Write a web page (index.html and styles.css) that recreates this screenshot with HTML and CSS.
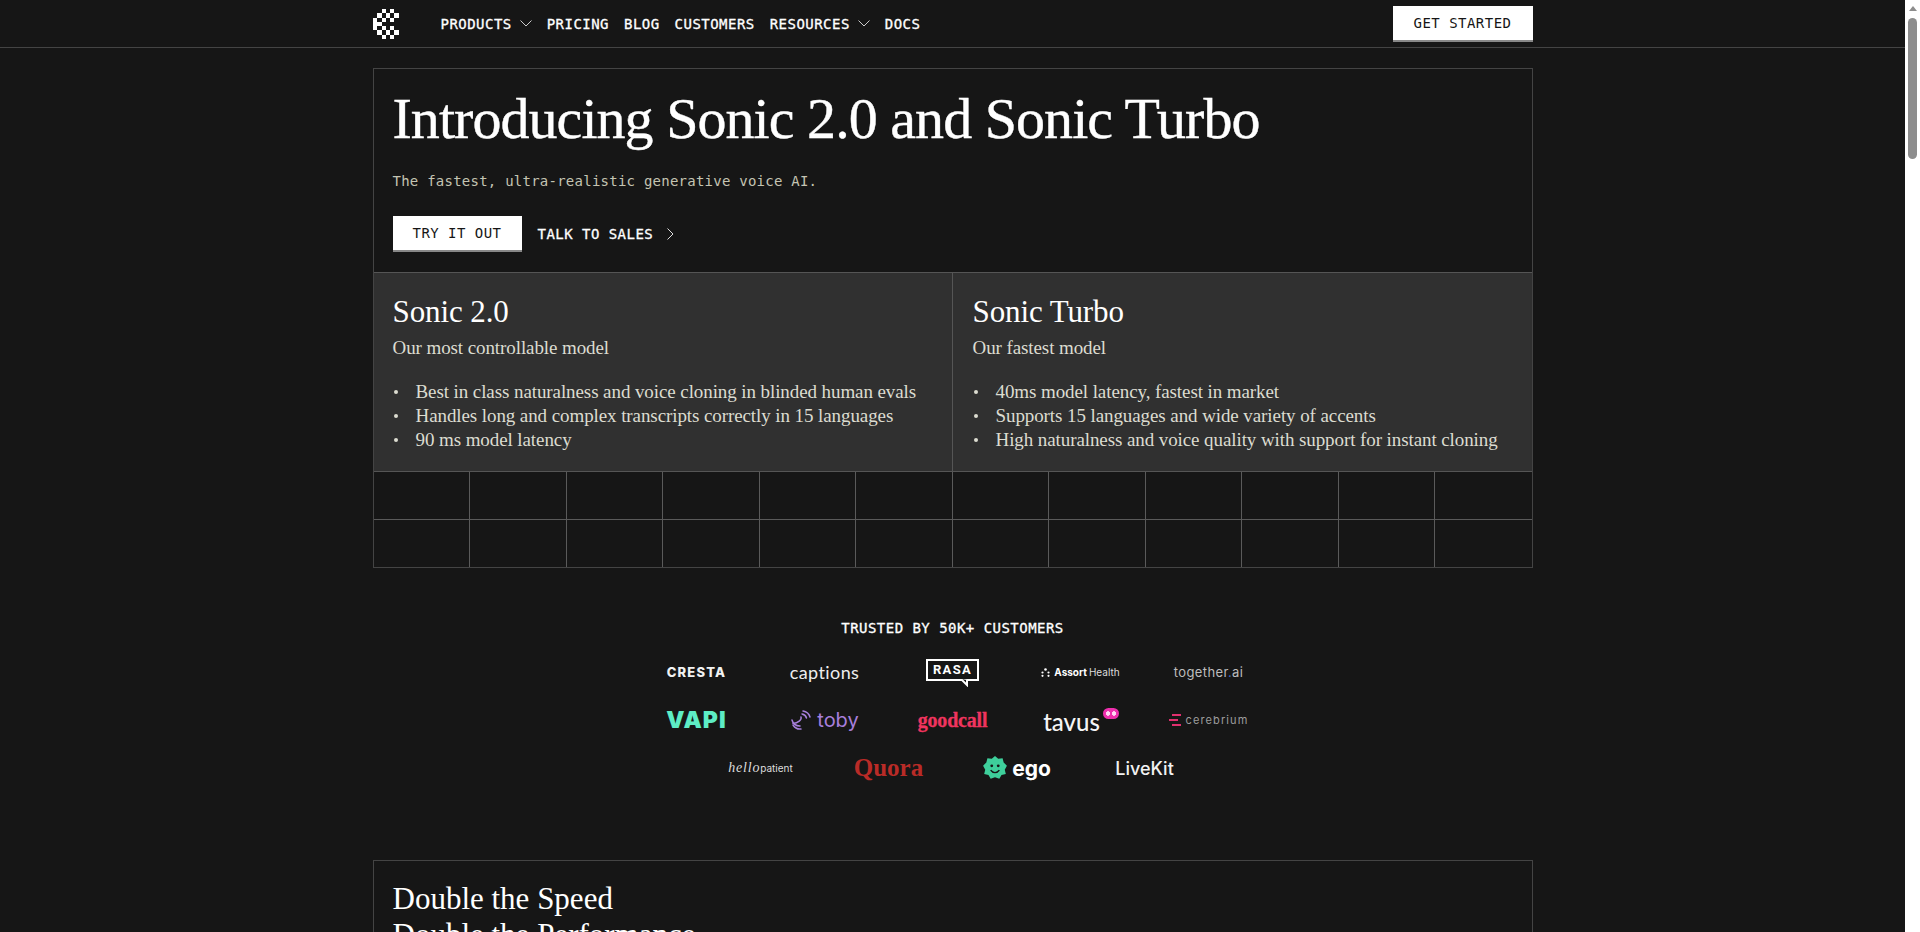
FILE: index.html
```html
<!DOCTYPE html>
<html lang="en">
<head>
<meta charset="utf-8">
<title>Cartesia</title>
<link rel="stylesheet" href="styles.css">
</head>
<body>
<div class="page">
  <header class="nav">
    <div class="nav-inner">
      <div class="nav-left">
        <svg class="logo" viewBox="0 0 7 7" width="30" height="30" shape-rendering="crispEdges" fill="#fff">
          <rect x="2" y="0" width="1" height="1"/><rect x="4" y="0" width="1" height="1"/>
          <rect x="1" y="1" width="1" height="1"/><rect x="3" y="1" width="1" height="1"/><rect x="5" y="1" width="1" height="1"/>
          <rect x="0" y="2" width="1" height="3"/><rect x="2" y="2" width="1" height="1"/><rect x="4" y="2" width="1" height="1"/>
          <rect x="1" y="3" width="1" height="1"/>
          <rect x="2" y="4" width="1" height="1"/><rect x="4" y="4" width="1" height="1"/>
          <rect x="1" y="5" width="1" height="1"/><rect x="3" y="5" width="1" height="1"/><rect x="5" y="5" width="1" height="1"/>
          <rect x="2" y="6" width="1" height="1"/><rect x="4" y="6" width="1" height="1"/>
        </svg>
        <nav class="links">
          <a class="link">PRODUCTS <svg class="caret" viewBox="0 0 12 7" width="12" height="7"><path d="M.5.5 6 6l5.500-5.500" fill="none" stroke="#ccc"/></svg></a>
          <a class="link">PRICING</a>
          <a class="link">BLOG</a>
          <a class="link">CUSTOMERS</a>
          <a class="link">RESOURCES <svg class="caret" viewBox="0 0 12 7" width="12" height="7"><path d="M.5.5 6 6l5.500-5.500" fill="none" stroke="#ccc"/></svg></a>
          <a class="link">DOCS</a>
        </nav>
      </div>
      <a class="btn btn-nav">GET STARTED</a>
    </div>
  </header>

  <main class="main">
    <section class="box">
      <div class="hero">
        <h1 class="title">Introducing Sonic 2.0 and Sonic Turbo</h1>
        <p class="sub">The fastest, ultra-realistic generative voice AI.</p>
        <div class="actions">
          <a class="btn btn-try">TRY IT OUT</a>
          <a class="talk">TALK TO SALES <svg class="chev" viewBox="0 0 7 12" width="7" height="12"><path d="M.5.5 6 6 .5 11.500" fill="none" stroke="#ddd"/></svg></a>
        </div>
      </div>
      <div class="models">
        <article class="model">
          <h2 class="model-name">Sonic 2.0</h2>
          <p class="model-desc">Our most controllable model</p>
          <ul class="list">
            <li>Best in class naturalness and voice cloning in blinded human evals</li>
            <li>Handles long and complex transcripts correctly in 15 languages</li>
            <li>90 ms model latency</li>
          </ul>
        </article>
        <article class="model">
          <h2 class="model-name">Sonic Turbo</h2>
          <p class="model-desc">Our fastest model</p>
          <ul class="list">
            <li>40ms model latency, fastest in market</li>
            <li>Supports 15 languages and wide variety of accents</li>
            <li>High naturalness and voice quality with support for instant cloning</li>
          </ul>
        </article>
      </div>
      <div class="grid">
        <i></i><i></i><i></i><i></i><i></i><i></i><i></i><i></i><i></i><i></i><i></i><i></i>
        <i></i><i></i><i></i><i></i><i></i><i></i><i></i><i></i><i></i><i></i><i></i><i></i>
      </div>
    </section>

    <section class="trusted">
      <h3 class="trusted-title">TRUSTED BY 50K+ CUSTOMERS</h3>
      <div class="logos">
        <div class="cell"><span class="l-cresta">CRESTA</span></div>
        <div class="cell"><span class="l-captions">captions</span></div>
        <div class="cell"><span class="l-rasa">RASA<svg class="rasa-tail" viewBox="0 0 14 8" width="14" height="8"><path d="M1 0 7 6V1" fill="#161616" stroke="#fff" stroke-width="2"/></svg></span></div>
        <div class="cell"><span class="l-assort"><svg viewBox="0 0 9 9" width="9" height="9" fill="#fff"><circle cx="4.500" cy="1.500" r="1.300"/><circle cx="1.500" cy="4.500" r="1.100"/><circle cx="7.500" cy="4.500" r="1.100"/><circle cx="1.500" cy="7.800" r="1.100"/><circle cx="7.500" cy="7.800" r="1.100"/></svg><b>Assort</b> Health</span></div>
        <div class="cell"><span class="l-together">together<em>.</em>ai</span></div>

        <div class="cell"><span class="l-vapi">VAPI</span></div>
        <div class="cell"><span class="l-toby"><svg viewBox="0 0 22 22" width="22" height="22" fill="none" stroke="#a77fdc" stroke-width="1.500" stroke-linecap="round"><path d="M13 2c3 .5 6 2.500 7 6"/><path d="M12 5c2.500.5 4 2 4.500 4"/><path d="M11 8c1 3-3 6-8 6.500"/><path d="M2 11c1 4 4 6 8 6"/><path d="M3 16c2 3 5 4.500 8 4"/></svg>toby</span></div>
        <div class="cell"><span class="l-goodcall">goodcall</span></div>
        <div class="cell"><span class="l-tavus">tavus<span class="tavus-dot"></span></span></div>
        <div class="cell"><span class="l-cerebrium"><svg viewBox="0 0 12 12" width="12" height="12" fill="#e0306e"><rect x="3" y="0" width="9" height="2"/><rect x="0" y="5" width="9" height="2"/><rect x="3" y="10" width="9" height="2"/></svg>cerebrium</span></div>

        <div class="cell"><span class="l-hello"><i>hello</i>patient</span></div>
        <div class="cell"><span class="l-quora">Quora</span></div>
        <div class="cell"><span class="l-ego"><svg viewBox="0 0 24 24" width="26" height="26"><path d="M12 1l3 2.500 4-.5 1 4 3 3-2 3.500 1 4-4 1-2 3.500-4-1.500-4 1.500-2-3.500-4-1 1-4-2-3.500 3-3 1-4 4 .5z" fill="#3ecf9b"/><circle cx="9" cy="10" r="1.300" fill="#161616"/><circle cx="15" cy="10" r="1.300" fill="#161616"/><path d="M8 14c2 3 6 3 8 0" stroke="#161616" stroke-width="1.300" fill="none"/></svg>ego</span></div>
        <div class="cell"><span class="l-livekit">LiveKit</span></div>
      </div>
    </section>

    <section class="box box-speed">
      <h2 class="speed-title">Double the Speed<br>Double the Performance</h2>
    </section>
  </main>
</div>
<aside class="scrollbar">
  <span class="arrow"></span>
  <span class="thumb"></span>
</aside>
</body>
</html>
```
FILE: styles.css
```css
* { box-sizing: border-box; }
html, body { margin: 0; height: 100%; overflow: hidden; }
body {
  display: flex;
  background: #161616;
  color: #fff;
  font-family: "DejaVu Sans Mono", monospace;
}
.page { flex: 1; min-width: 0; height: 932px; overflow: hidden; }
.scrollbar {
  flex: 0 0 15px;
  width: 15px;
  height: 932px;
  background: #fff;
  display: flex;
  flex-direction: column;
  align-items: center;
}
.arrow {
  margin-top: 6px;
  width: 0;
  height: 0;
  border-left: 4px solid transparent;
  border-right: 4px solid transparent;
  border-bottom: 5px solid #8d8d8d;
}
.thumb {
  margin-top: 7px;
  width: 9px;
  height: 141px;
  border-radius: 5px;
  background: #8d8d8d;
}

.nav { height: 48px; border-bottom: 1px solid #444; }
.nav-inner {
  width: 1160px;
  height: 47px;
  margin: 0 auto;
  display: flex;
  align-items: center;
  justify-content: space-between;
}
.nav-left { display: flex; align-items: center; }
.logo { display: block; }
.links {
  display: flex;
  align-items: center;
  gap: 15px;
  margin-left: 38px;
  font-size: 14px;
  letter-spacing: .47px;
  -webkit-text-stroke: .3px #fff;
}
.link { display: flex; align-items: center; gap: 8px; white-space: nowrap; }
.caret { display: block; }

.btn {
  display: flex;
  align-items: center;
  justify-content: center;
  height: 36px;
  background: #fff;
  color: #161616;
  border-bottom: 2px solid #888;
  font-size: 14px;
  letter-spacing: .47px;
  white-space: nowrap;
}
.btn-nav { width: 140px; }
.btn-try { width: 129px; }

.main { width: 1160px; margin: 20px auto 0; }
.box { border: 1px solid #444; }
.hero { height: 203px; padding: 15px 19px 0; }
.title {
  margin: 0;
  font-family: "Liberation Serif", serif;
  font-size: 58px;
  font-weight: 400;
  line-height: 70px;
  letter-spacing: -.95px;
  -webkit-text-stroke: .4px #fff;
}
.sub {
  margin: 18px 0 0;
  font-size: 14px;
  line-height: 18px;
  letter-spacing: .24px;
  color: #c4c4b2;
}
.actions { display: flex; align-items: center; margin-top: 26px; }
.talk {
  display: flex;
  align-items: center;
  gap: 14px;
  margin-left: 16px;
  font-size: 14px;
  letter-spacing: .47px;
  -webkit-text-stroke: .3px #fff;
  white-space: nowrap;
}
.chev { display: block; }

.models {
  display: grid;
  grid-template-columns: 578px 1fr;
  height: 200px;
  background: #303030;
  border-top: 1px solid #555;
  border-bottom: 1px solid #555;
}
.model { padding: 21px 19px 0; font-family: "Liberation Serif", serif; }
.model + .model { border-left: 1px solid #555; padding-left: 20px; }
.model-name {
  margin: 0;
  font-size: 31px;
  font-weight: 400;
  line-height: 36px;
  letter-spacing: -.1px;
}
.model-desc {
  margin: 6px 0 0;
  font-size: 19px;
  line-height: 24px;
  letter-spacing: -.09px;
  color: #dcdcd0;
}
.list {
  list-style: none;
  margin: 20px 0 0;
  padding: 0;
  font-size: 19px;
  line-height: 24px;
  letter-spacing: -.09px;
  color: #dcdcd0;
}
.list li { position: relative; padding-left: 23px; white-space: nowrap; }
.list li::before {
  content: "";
  position: absolute;
  left: 1px;
  top: 10px;
  width: 4px;
  height: 4px;
  border-radius: 50%;
  background: #dcdcd0;
}

.grid {
  display: grid;
  grid-template-columns: repeat(12, 1fr);
  grid-template-rows: 48px 47px;
}
.grid i { border-right: 1px solid #5a5a5a; border-bottom: 1px solid #5a5a5a; }
.grid i:nth-child(12n) { border-right: 0; }
.grid i:nth-child(n+13) { border-bottom: 0; }

.trusted { margin-top: 50px; display: flex; flex-direction: column; align-items: center; }
.trusted-title {
  margin: 0;
  font-size: 14px;
  font-weight: 400;
  line-height: 20px;
  letter-spacing: .47px;
  -webkit-text-stroke: .3px #fff;
}
.logos {
  width: 640px;
  margin-top: 10px;
  display: flex;
  flex-wrap: wrap;
  justify-content: center;
}
.cell {
  flex: 0 0 128px;
  height: 48px;
  display: flex;
  align-items: center;
  justify-content: center;
  white-space: nowrap;
  font-family: "Inter", sans-serif;
}
.l-cresta { font: 800 13px "Inter", sans-serif; letter-spacing: 1.200px; color: #f2f2f2; }
.l-captions { font: 400 18px "Lato", sans-serif; letter-spacing: .4px; color: #eee; }
.l-rasa {
  position: relative;
  padding: 2px 5px;
  border: 2px solid #fff;
  font: 700 13px "Roboto", sans-serif;
  letter-spacing: 1.300px;
  line-height: 14px;
  margin-top: -4px;
}
.rasa-tail { position: absolute; right: 3px; bottom: -8px; display: block; }
.l-assort { display: flex; align-items: center; gap: 4px; font: 400 10px "Inter", sans-serif; color: #ddd; }
.l-assort b { font-weight: 700; color: #fff; margin-right: -2px; }
.l-together { font: 400 13px "Inter", sans-serif; letter-spacing: .4px; color: #bdbdbd; }
.l-together em { font-style: normal; color: #3a67c8; }
.l-vapi { font: 900 23px "Inter", sans-serif; letter-spacing: 1px; color: #5dedc5; }
.l-toby { display: flex; align-items: center; gap: 5px; font: 400 20px "Inter", sans-serif; color: #a77fdc; }
.l-goodcall { font: 700 20px "Liberation Serif", serif; letter-spacing: -.2px; color: #f0345f; -webkit-text-stroke: .3px #f0345f; }
.l-tavus { position: relative; display: block; margin-left: -18px; font: 500 24px "Lato", sans-serif; color: #f5f5f5; line-height: 26px; margin-top: 4px; }
.tavus-dot {
  position: absolute;
  right: -19px;
  top: -1px;
  width: 16px;
  height: 11px;
  border-radius: 6px;
  background: radial-gradient(circle at 5px 5.500px, #ffd6f2 2px, transparent 2.500px), radial-gradient(circle at 11px 5.500px, #ffd6f2 2px, transparent 2.500px), #ee2fae;
}
.l-cerebrium { display: flex; align-items: center; gap: 5px; font: 400 11px "Inter", sans-serif; letter-spacing: 1.100px; color: #9d9d9d; }
.l-hello { font: 400 10px "Inter", sans-serif; color: #ddd; }
.l-hello i { font: italic 400 14px "Liberation Serif", serif; letter-spacing: .8px; }
.l-quora { font: 700 25px "Liberation Serif", serif; color: #b92b27; }
.l-ego { display: flex; align-items: center; gap: 4px; font: 700 21px "Inter", sans-serif; color: #fff; }
.l-livekit { font: 500 18px "Inter", sans-serif; color: #f2f2f2; }

.box-speed { margin-top: 68px; height: 200px; padding: 20px 19px; }
.speed-title {
  margin: 0;
  font-family: "Liberation Serif", serif;
  font-size: 31px;
  font-weight: 400;
  line-height: 36px;
}
```
